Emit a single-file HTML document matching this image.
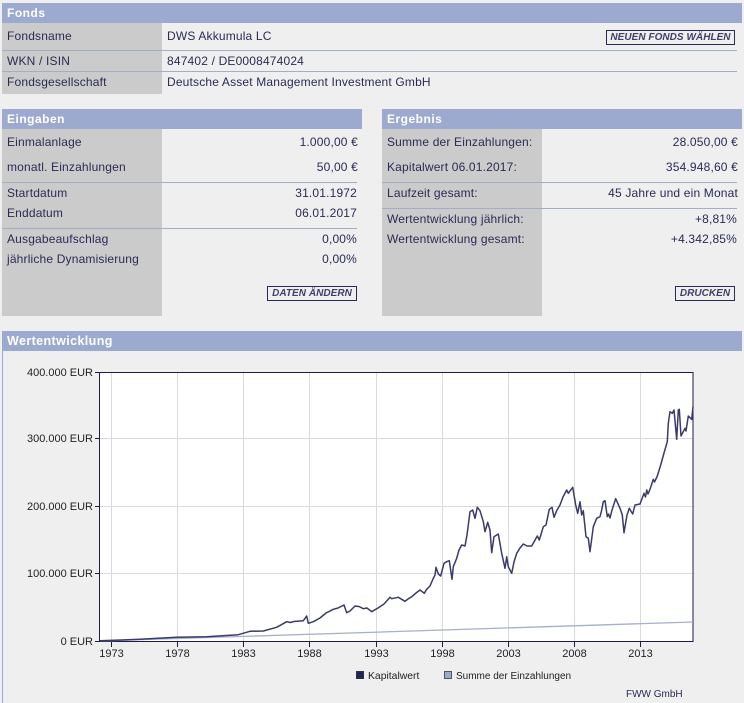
<!DOCTYPE html>
<html lang="de"><head><meta charset="utf-8"><title>Fonds</title>
<style>
html,body{margin:0;padding:0;background:#efefef}
body{width:744px;height:703px;position:relative;overflow:hidden;font-family:"Liberation Sans",Arial,sans-serif;font-size:12px;color:#2a2a55}
div{position:absolute}
.h{background:#9daacf;color:#fff;font-weight:bold;height:20px;line-height:21px;padding-left:5px;box-sizing:border-box;letter-spacing:.5px}
.g{background:#cbcbcb}
.l{height:1px;background:#a3adc6}
.t{white-space:nowrap;line-height:14px;letter-spacing:.17px}
.r{text-align:right}
.b{border:1px solid #2a2a55;box-sizing:border-box;height:15px;font:italic bold 10px/14px "Liberation Sans",Arial,sans-serif;text-align:center;color:#3f3f6c;letter-spacing:.04px;white-space:nowrap}
svg{position:absolute;left:0;top:0}
svg text{font-family:"Liberation Sans",Arial,sans-serif;font-size:11px;fill:#222}
</style></head><body>

<div class="h" style="left:2px;top:3px;width:740px">Fonds</div>
<div class="g" style="left:2px;top:23px;width:160px;height:71px"></div>
<div class="l" style="left:2px;top:50px;width:735px"></div>
<div class="l" style="left:2px;top:71px;width:735px"></div>
<div class="t" style="left:7px;top:29px">Fondsname</div>
<div class="t" style="left:7px;top:54px">WKN / ISIN</div>
<div class="t" style="left:7px;top:75px">Fondsgesellschaft</div>
<div class="t" style="left:167px;top:29px">DWS Akkumula LC</div>
<div class="t" style="left:167px;top:54px">847402 / DE0008474024</div>
<div class="t" style="left:167px;top:75px">Deutsche Asset Management Investment GmbH</div>
<div class="b" style="left:606px;top:30px;width:129px">NEUEN FONDS WÄHLEN</div>

<div class="h" style="left:2px;top:109px;width:360px">Eingaben</div>
<div class="g" style="left:2px;top:129px;width:160px;height:187px"></div>
<div class="l" style="left:2px;top:182px;width:355px"></div>
<div class="l" style="left:2px;top:228px;width:355px"></div>
<div class="t" style="left:7px;top:135px">Einmalanlage</div>
<div class="t" style="left:7px;top:160px">monatl. Einzahlungen</div>
<div class="t" style="left:7px;top:186px">Startdatum</div>
<div class="t" style="left:7px;top:206px">Enddatum</div>
<div class="t" style="left:7px;top:232px">Ausgabeaufschlag</div>
<div class="t" style="left:7px;top:252px">jährliche Dynamisierung</div>
<div class="t r" style="right:386px;top:135px">1.000,00 €</div>
<div class="t r" style="right:386px;top:160px">50,00 €</div>
<div class="t r" style="right:387px;top:186px">31.01.1972</div>
<div class="t r" style="right:387px;top:206px">06.01.2017</div>
<div class="t r" style="right:387px;top:232px">0,00%</div>
<div class="t r" style="right:387px;top:252px">0,00%</div>
<div class="b" style="left:267px;top:286px;width:90px">DATEN ÄNDERN</div>

<div class="h" style="left:382px;top:109px;width:360px">Ergebnis</div>
<div class="g" style="left:382px;top:129px;width:160px;height:187px"></div>
<div class="l" style="left:382px;top:182px;width:355px"></div>
<div class="l" style="left:382px;top:208px;width:355px"></div>
<div class="t" style="left:387px;top:135px">Summe der Einzahlungen:</div>
<div class="t" style="left:387px;top:160px">Kapitalwert 06.01.2017:</div>
<div class="t" style="left:387px;top:186px">Laufzeit gesamt:</div>
<div class="t" style="left:387px;top:212px">Wertentwicklung jährlich:</div>
<div class="t" style="left:387px;top:232px">Wertentwicklung gesamt:</div>
<div class="t r" style="right:6px;top:135px">28.050,00 €</div>
<div class="t r" style="right:6px;top:160px">354.948,60 €</div>
<div class="t r" style="right:6px;top:186px">45 Jahre und ein Monat</div>
<div class="t r" style="right:7px;top:212px">+8,81%</div>
<div class="t r" style="right:7px;top:232px">+4.342,85%</div>
<div class="b" style="left:675px;top:286px;width:60px">DRUCKEN</div>

<div class="h" style="left:2px;top:331px;width:740px;font-size:12.5px;letter-spacing:.4px">Wertentwicklung</div>
<div style="left:2px;top:351px;width:1px;height:352px;background:#9daacf"></div>

<svg width="744" height="703" viewBox="0 0 744 703">
<rect x="99.5" y="372.5" width="593.5" height="269" fill="#fff"/>
<g stroke="#dadada" stroke-width="1" fill="none">
<path d="M111.5 372V641M177.5 372V641M243.5 372V641M309.5 372V641M376.5 372V641M442.5 372V641M508.5 372V641M574.5 372V641M640.5 372V641"/>
<path d="M100 438.5H693M100 506.5H693M100 573.5H693"/>
</g>
<g stroke="#1c1c44" stroke-width="1" fill="none">
<path d="M99.5 372.5H693V641.5H99.5Z"/>
<path d="M95 372.5H100M95 438.5H100M95 506.5H100M95 573.5H100M95 641.5H100"/>
<path d="M111.5 642V647M177.5 642V647M243.5 642V647M309.5 642V647M376.5 642V647M442.5 642V647M508.5 642V647M574.5 642V647M640.5 642V647"/>
</g>
<path d="M100 641 L693 622" stroke="#a6afcb" stroke-width="1.3" fill="none"/>
<polyline fill="none" stroke="#3a3a6c" stroke-width="1.5" stroke-linejoin="round" points="100,640.7 140,639.3 176.7,637.3 206.7,636.7 238.3,634.7 250,631.3 263.3,631 276.7,627.3 286.7,621.7 290,622.5 294,621.5 303.3,620.7 306.7,616 308.3,623.3 313.3,621.7 320,618 326,613 333.3,609.3 338,608 344,605 346.7,612.7 350,611 355,606 359,606.5 363.3,608.7 367,608 371.7,611.7 378,608 384,604 390,597.3 391.7,598.7 398.3,597.3 405,601.3 408,599 411.7,596.7 416,593 420,590 424.3,593.3 426.7,589.3 430,586 433,579 435,575 436,567.3 438.3,574 440.7,576 444,563.3 446.7,561.7 449.3,560.7 452,579.3 453.3,566.7 456.7,558.3 459,550 461.7,545 465,546 467,535 470,511.7 472.7,510 475,518.3 477.3,507.3 480,510.7 483.3,521.7 485,531.7 487.7,522.3 490,530 491.7,552.7 494,536.7 498.3,534 501.7,553.3 505,568.3 506.7,556.7 508.3,566.7 511.7,573.3 514,562 516.7,553.3 520,548 523.3,544 527,546 531.7,546 537.3,536 539.3,540 543.3,526.7 546,525 549.3,509.3 552,507.3 554,517.3 557,510 560,505 563,497 566.7,490 568.3,493.3 572.7,487.3 574,495 575.7,505 577.7,513.3 580,501.7 581.7,515 583.3,510.7 586,536.7 588.3,538.3 590,551.7 593.3,526.7 596.7,518.3 600,516.7 601.7,510 603.3,501.7 605,500.7 607.3,516.7 608.5,514 610,518 612,510 615.7,498.7 620,508.3 622.3,515 624,532.7 627,515 629.3,508.3 632.7,514 635,505 640,504 644,493.3 645.5,497 646.7,490 648,494 650,489.3 653.3,479.3 654.5,482 657.3,476 660.7,465 664,453 667.3,441.7 668.3,423.3 670,411.7 672.3,413.3 674,410 676.7,439.3 678.3,410 679.3,409.3 681,436 685,428.3 686,431 688.3,416 691.7,419.3 693,406.7"/>
<g text-anchor="end">
<text x="93" y="376">400.000 EUR</text>
<text x="93" y="442">300.000 EUR</text>
<text x="93" y="510">200.000 EUR</text>
<text x="93" y="577">100.000 EUR</text>
<text x="93" y="645">0 EUR</text>
</g>
<g text-anchor="middle">
<text x="111.5" y="657">1973</text>
<text x="177.5" y="657">1978</text>
<text x="243.5" y="657">1983</text>
<text x="309.5" y="657">1988</text>
<text x="376.5" y="657">1993</text>
<text x="442.5" y="657">1998</text>
<text x="508.5" y="657">2003</text>
<text x="574.5" y="657">2008</text>
<text x="640.5" y="657">2013</text>
</g>
<rect x="356.5" y="671.5" width="7" height="7" fill="#20265c" stroke="#333"/>
<text x="368" y="679" style="font-size:10.4px">Kapitalwert</text>
<rect x="444.5" y="671.5" width="7" height="7" fill="#9daacf" stroke="#555"/>
<text x="456" y="679" style="font-size:10px">Summe der Einzahlungen</text>
<text x="626" y="697" style="font-size:10px;fill:#2a2a55">FWW GmbH</text>
</svg>
</body></html>
